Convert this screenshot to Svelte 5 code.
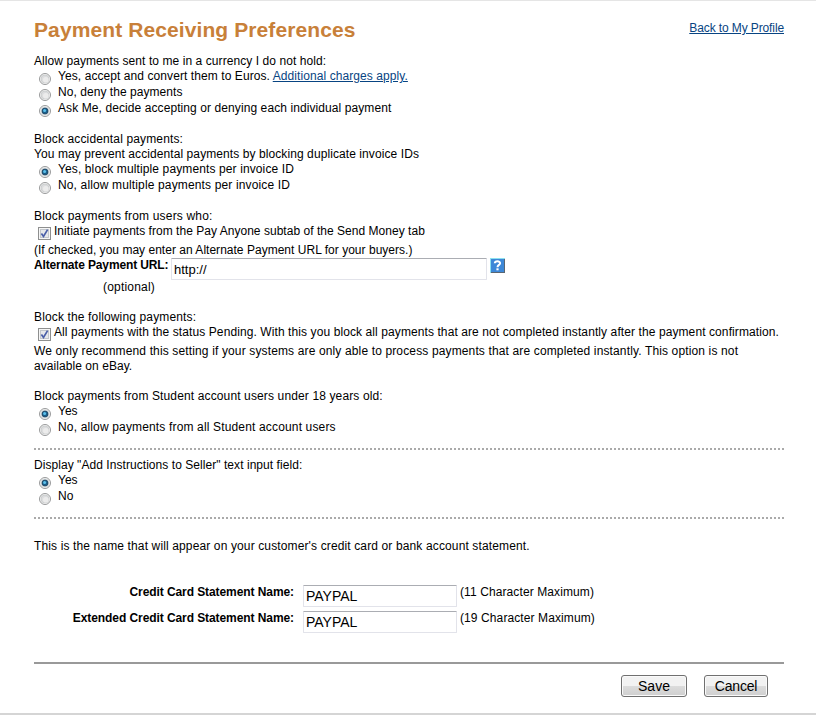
<script>
  const currency = [
    { text: 'Yes, accept and convert them to Euros. ', link: 'Additional charges apply.', track: 0.078 },
    { text: 'No, deny the payments', track: 0.05 },
    { text: 'Ask Me, decide accepting or denying each individual payment', on: true, track: 0.088 }
  ];
  const duplicates = [
    { text: 'Yes, block multiple payments per invoice ID', on: true, track: 0.116 },
    { text: 'No, allow multiple payments per invoice ID', track: 0.14 }
  ];
  const students = [
    { text: 'Yes', on: true, track: 0 },
    { text: 'No, allow payments from all Student account users', track: 0.155 }
  ];
  const instructions = [
    { text: 'Yes', on: true, track: 0 },
    { text: 'No', track: 0 }
  ];
</script>

{#snippet line(text, track)}
  <p style:letter-spacing="{track}px">{text}</p>
{/snippet}

{#snippet radios(options)}
  {#each options as o}
    <div class="radio-row">
      <svg class="radio" width="12" height="12" viewBox="0 0 12 12">
        <circle cx="6" cy="6" r="5.5" fill="#f8f8f8" stroke="#98999a" />
        {#if o.on}
          <circle cx="6" cy="6" r="4" fill="#e4e9ed" stroke="#c3c8cc" stroke-width=".7" />
          <circle cx="6" cy="6" r="3" fill="#1b5e8a" stroke="#163c58" stroke-width=".7" />
          <circle cx="5.6" cy="5.4" r="1.5" fill="#5cc0ea" />
        {:else}
          <circle cx="6" cy="6" r="4" fill="#dcddde" stroke="#c8cacc" stroke-width=".8" />
          <circle cx="6.8" cy="6.8" r="2.8" fill="#ececec" />
        {/if}
      </svg>
      <span style:letter-spacing="{o.track}px">{o.text}{#if o.link}<a href="#charges">{o.link}</a>{/if}</span>
    </div>
  {/each}
{/snippet}

{#snippet check(text, track)}
  <div class="check-row">
    <svg class="check" width="13" height="13" viewBox="0 0 13 13">
      <rect x=".5" y=".5" width="12" height="12" fill="#f6f6f6" stroke="#8e8f8f" />
      <rect x="2.5" y="2.5" width="8" height="8" fill="#e6e8eb" stroke="#c3c7cc" />
      <path d="M3.4 6.4 5.5 9.4 9.6 2.6" fill="none" stroke="#4a5fa8" stroke-width="1.7" />
    </svg>
    <span style:letter-spacing="{track}px">{text}</span>
  </div>
{/snippet}

<main>
  <header>
    <h1>Payment Receiving Preferences</h1>
    <a href="#profile">Back to My Profile</a>
  </header>

  <section>
    {@render line('Allow payments sent to me in a currency I do not hold:', 0.075)}
    {@render radios(currency)}
  </section>

  <section>
    {@render line('Block accidental payments:', 0.14)}
    {@render line('You may prevent accidental payments by blocking duplicate invoice IDs', 0.085)}
    {@render radios(duplicates)}
  </section>

  <section>
    {@render line('Block payments from users who:', 0.17)}
    {@render check('Initiate payments from the Pay Anyone subtab of the Send Money tab', 0.03)}
    {@render line('(If checked, you may enter an Alternate Payment URL for your buyers.)', 0.02)}
    <div class="url-row">
      <b>Alternate Payment URL:</b>
      <input class="url" value="http://" />
      <svg class="help" width="15" height="15" viewBox="0 0 15 15">
        <rect width="15" height="15" fill="#8ce0f0" />
        <path d="M1 1H15V15H1Z" fill="#5a6672" />
        <rect x="1" y="1" width="13" height="13" fill="#3d88d8" />
        <path d="M4.8 5.3C4.9 2.7 10.2 2.7 10.1 5.2 10 7 7.5 6.8 7.5 9.2" fill="none" stroke="#fff" stroke-width="2" />
        <rect x="6.4" y="10.3" width="2.2" height="2" fill="#fff" />
      </svg>
    </div>
    <p class="optional">(optional)</p>
  </section>

  <section>
    {@render line('Block the following payments:', 0.14)}
    {@render check('All payments with the status Pending. With this you block all payments that are not completed instantly after the payment confirmation.', 0.093)}
    {@render line('We only recommend this setting if your systems are only able to process payments that are completed instantly. This option is not', 0.138)}
    {@render line('available on eBay.', 0.06)}
  </section>

  <section class="last">
    {@render line('Block payments from Student account users under 18 years old:', 0.13)}
    {@render radios(students)}
  </section>

  <div class="dots"></div>

  <section class="last">
    {@render line('Display "Add Instructions to Seller" text input field:', 0.055)}
    {@render radios(instructions)}
  </section>

  <div class="dots"></div>

  <p class="intro">This is the name that will appear on your customer's credit card or bank account statement.</p>

  <div class="name-row">
    <b>Credit Card Statement Name:</b>
    <input value="PAYPAL" />
    <span>(11 Character Maximum)</span>
  </div>
  <div class="name-row">
    <b>Extended Credit Card Statement Name:</b>
    <input value="PAYPAL" />
    <span>(19 Character Maximum)</span>
  </div>

  <footer>
    <button class="save">Save</button>
    <button class="cancel">Cancel</button>
  </footer>
</main>

<style>
  :global(body) { margin: 0; background: #fff; }
  main {
    box-sizing: border-box;
    height: 715px;
    padding: 0 32px 0 34px;
    border-top: 1px solid #e5e5e5;
    border-bottom: 2px solid #d5d5d5;
    font: 12px/15px "Liberation Sans", Arial, sans-serif;
    color: #000;
    white-space: nowrap;
    overflow: hidden;
  }
  header { display: flex; justify-content: space-between; height: 53px; }
  h1 { margin: 16px 0 0; font-size: 21px; line-height: 26px; letter-spacing: .1px; color: #c88039; }
  header a { margin-top: 20px; height: 15px; letter-spacing: -.11px; }
  a { color: #084482; text-decoration: underline; }
  p { margin: 0; }
  section { margin-bottom: 15px; }
  section.last { margin-bottom: 12px; }
  .radio-row { display: flex; height: 16px; padding-left: 5px; gap: 7px; }
  .radio { margin-top: 4px; flex: none; }
  .check-row { display: flex; height: 19px; padding-left: 4px; gap: 3px; }
  .check { margin-top: 3px; flex: none; }
  .url-row { display: flex; height: 22px; }
  .url-row b { width: 137px; letter-spacing: -.14px; }
  input {
    box-sizing: border-box;
    width: 154px;
    height: 22px;
    margin: 0;
    padding: 1px 2px;
    border: 1px solid #e2e3ea;
    border-top-color: #abadb3;
    border-radius: 1px;
    background: #fff;
    font: 14px "Liberation Sans", Arial, sans-serif;
    color: #000;
  }
  input.url { width: 316px; font-size: 13px; }
  .help { margin: 0 0 0 3px; }
  .optional { padding-left: 69px; letter-spacing: .2px; }
  .dots {
    height: 2px;
    margin-bottom: 8px;
    background: repeating-linear-gradient(90deg, #aaa 0 2px, transparent 2px 4px);
  }
  .intro { margin: 12px 0 31px; padding-top: 8px; letter-spacing: .13px; }
  .name-row { display: flex; height: 22px; margin-bottom: 4px; }
  .name-row b { width: 260px; margin-right: 9px; text-align: right; letter-spacing: -.08px; }
  .name-row span { margin-left: 3px; letter-spacing: .1px; }
  footer {
    display: flex;
    justify-content: flex-end;
    gap: 17px;
    margin-top: 29px;
    padding: 11px 16px 0 0;
    border-top: 2px solid #999;
  }
  button {
    box-sizing: border-box;
    height: 22px;
    padding: 0;
    border: 1px solid #707070;
    border-radius: 3px;
    background: linear-gradient(#f2f2f2 0 50%, #dcdcdc 50%, #cfcfcf);
    box-shadow: inset 0 0 0 1px #fafafa;
    font: 14px "Liberation Sans", Arial, sans-serif;
    color: #000;
  }
  .save { width: 66px; }
  .cancel { width: 64px; letter-spacing: -.2px; }
</style>
